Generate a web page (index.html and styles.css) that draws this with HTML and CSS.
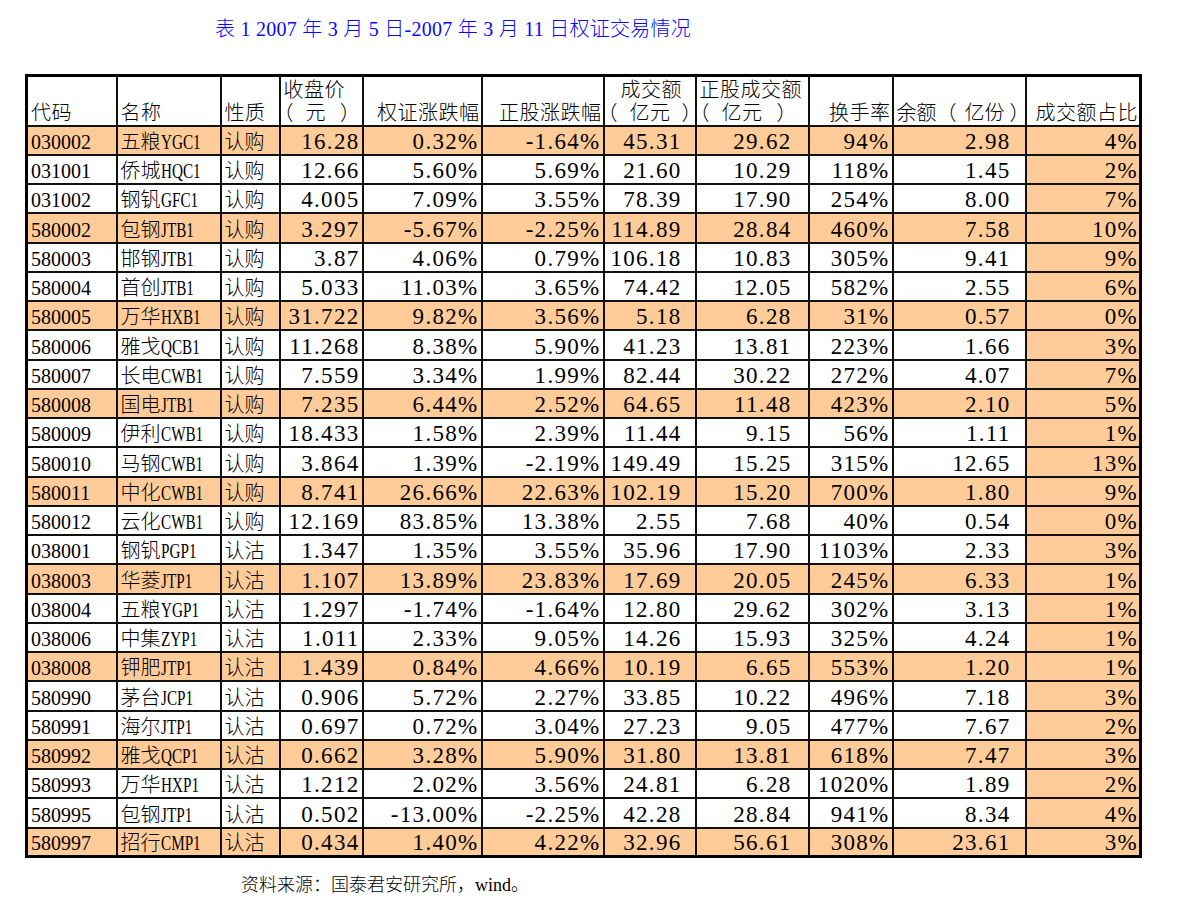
FILE: index.html
```html
<!DOCTYPE html>
<html lang="zh-CN">
<head>
<meta charset="utf-8">
<title>权证交易情况</title>
<link rel="stylesheet" href="styles.css">
</head>
<body>
<div class="page">
  <h1 class="title">表 1 2007 年 3 月 5 日-2007 年 3 月 11 日权证交易情况</h1>
  <table class="grid">
    <colgroup>
      <col class="c1"><col class="c2"><col class="c3"><col class="c4"><col class="c5"><col class="c6">
      <col class="c7"><col class="c8"><col class="c9"><col class="c10"><col class="c11">
    </colgroup>
    <thead>
      <tr>
        <th class="hl">代码</th>
        <th class="hl">名称</th>
        <th class="hl">性质</th>
        <th class="hl">收盘价<br><span class="po">（</span><span class="pin">元</span><span class="pc">）</span></th>
        <th class="hr">权证涨跌幅</th>
        <th class="hr">正股涨跌幅</th>
        <th class="hl narrow"><span class="ind">成交额</span><br><span class="po">（</span><span class="pin">亿元</span><span class="pc">）</span></th>
        <th class="hl">正股成交额<br><span class="po">（</span><span class="pin">亿元</span><span class="pc">）</span></th>
        <th class="hr">换手率</th>
        <th class="hl inline">余额（<span class="pin">亿份</span><span class="pc">）</span></th>
        <th class="hr">成交额占比</th>
      </tr>
    </thead>
    <tbody>
      <tr class="mark"><td class="code">030002</td><td class="name">五粮<span class="en">YGC1</span></td><td class="kind">认购</td><td class="num">16.28</td><td class="num">0.32%</td><td class="num">-1.64%</td><td class="num amt">45.31</td><td class="num amt2">29.62</td><td class="num">94%</td><td class="num bal">2.98</td><td class="num share">4%</td></tr>
      <tr><td class="code">031001</td><td class="name">侨城<span class="en">HQC1</span></td><td class="kind">认购</td><td class="num">12.66</td><td class="num">5.60%</td><td class="num">5.69%</td><td class="num amt">21.60</td><td class="num amt2">10.29</td><td class="num">118%</td><td class="num bal">1.45</td><td class="num share">2%</td></tr>
      <tr><td class="code">031002</td><td class="name">钢钒<span class="en">GFC1</span></td><td class="kind">认购</td><td class="num">4.005</td><td class="num">7.09%</td><td class="num">3.55%</td><td class="num amt">78.39</td><td class="num amt2">17.90</td><td class="num">254%</td><td class="num bal">8.00</td><td class="num share">7%</td></tr>
      <tr class="mark"><td class="code">580002</td><td class="name">包钢<span class="en">JTB1</span></td><td class="kind">认购</td><td class="num">3.297</td><td class="num">-5.67%</td><td class="num">-2.25%</td><td class="num amt">114.89</td><td class="num amt2">28.84</td><td class="num">460%</td><td class="num bal">7.58</td><td class="num share">10%</td></tr>
      <tr><td class="code">580003</td><td class="name">邯钢<span class="en">JTB1</span></td><td class="kind">认购</td><td class="num">3.87</td><td class="num">4.06%</td><td class="num">0.79%</td><td class="num amt">106.18</td><td class="num amt2">10.83</td><td class="num">305%</td><td class="num bal">9.41</td><td class="num share">9%</td></tr>
      <tr><td class="code">580004</td><td class="name">首创<span class="en">JTB1</span></td><td class="kind">认购</td><td class="num">5.033</td><td class="num">11.03%</td><td class="num">3.65%</td><td class="num amt">74.42</td><td class="num amt2">12.05</td><td class="num">582%</td><td class="num bal">2.55</td><td class="num share">6%</td></tr>
      <tr class="mark"><td class="code">580005</td><td class="name">万华<span class="en">HXB1</span></td><td class="kind">认购</td><td class="num">31.722</td><td class="num">9.82%</td><td class="num">3.56%</td><td class="num amt">5.18</td><td class="num amt2">6.28</td><td class="num">31%</td><td class="num bal">0.57</td><td class="num share">0%</td></tr>
      <tr><td class="code">580006</td><td class="name">雅戈<span class="en">QCB1</span></td><td class="kind">认购</td><td class="num">11.268</td><td class="num">8.38%</td><td class="num">5.90%</td><td class="num amt">41.23</td><td class="num amt2">13.81</td><td class="num">223%</td><td class="num bal">1.66</td><td class="num share">3%</td></tr>
      <tr><td class="code">580007</td><td class="name">长电<span class="en">CWB1</span></td><td class="kind">认购</td><td class="num">7.559</td><td class="num">3.34%</td><td class="num">1.99%</td><td class="num amt">82.44</td><td class="num amt2">30.22</td><td class="num">272%</td><td class="num bal">4.07</td><td class="num share">7%</td></tr>
      <tr class="mark"><td class="code">580008</td><td class="name">国电<span class="en">JTB1</span></td><td class="kind">认购</td><td class="num">7.235</td><td class="num">6.44%</td><td class="num">2.52%</td><td class="num amt">64.65</td><td class="num amt2">11.48</td><td class="num">423%</td><td class="num bal">2.10</td><td class="num share">5%</td></tr>
      <tr><td class="code">580009</td><td class="name">伊利<span class="en">CWB1</span></td><td class="kind">认购</td><td class="num">18.433</td><td class="num">1.58%</td><td class="num">2.39%</td><td class="num amt">11.44</td><td class="num amt2">9.15</td><td class="num">56%</td><td class="num bal">1.11</td><td class="num share">1%</td></tr>
      <tr><td class="code">580010</td><td class="name">马钢<span class="en">CWB1</span></td><td class="kind">认购</td><td class="num">3.864</td><td class="num">1.39%</td><td class="num">-2.19%</td><td class="num amt">149.49</td><td class="num amt2">15.25</td><td class="num">315%</td><td class="num bal">12.65</td><td class="num share">13%</td></tr>
      <tr class="mark"><td class="code">580011</td><td class="name">中化<span class="en">CWB1</span></td><td class="kind">认购</td><td class="num">8.741</td><td class="num">26.66%</td><td class="num">22.63%</td><td class="num amt">102.19</td><td class="num amt2">15.20</td><td class="num">700%</td><td class="num bal">1.80</td><td class="num share">9%</td></tr>
      <tr><td class="code">580012</td><td class="name">云化<span class="en">CWB1</span></td><td class="kind">认购</td><td class="num">12.169</td><td class="num">83.85%</td><td class="num">13.38%</td><td class="num amt">2.55</td><td class="num amt2">7.68</td><td class="num">40%</td><td class="num bal">0.54</td><td class="num share">0%</td></tr>
      <tr><td class="code">038001</td><td class="name">钢钒<span class="en">PGP1</span></td><td class="kind">认沽</td><td class="num">1.347</td><td class="num">1.35%</td><td class="num">3.55%</td><td class="num amt">35.96</td><td class="num amt2">17.90</td><td class="num">1103%</td><td class="num bal">2.33</td><td class="num share">3%</td></tr>
      <tr class="mark"><td class="code">038003</td><td class="name">华菱<span class="en">JTP1</span></td><td class="kind">认沽</td><td class="num">1.107</td><td class="num">13.89%</td><td class="num">23.83%</td><td class="num amt">17.69</td><td class="num amt2">20.05</td><td class="num">245%</td><td class="num bal">6.33</td><td class="num share">1%</td></tr>
      <tr><td class="code">038004</td><td class="name">五粮<span class="en">YGP1</span></td><td class="kind">认沽</td><td class="num">1.297</td><td class="num">-1.74%</td><td class="num">-1.64%</td><td class="num amt">12.80</td><td class="num amt2">29.62</td><td class="num">302%</td><td class="num bal">3.13</td><td class="num share">1%</td></tr>
      <tr><td class="code">038006</td><td class="name">中集<span class="en">ZYP1</span></td><td class="kind">认沽</td><td class="num">1.011</td><td class="num">2.33%</td><td class="num">9.05%</td><td class="num amt">14.26</td><td class="num amt2">15.93</td><td class="num">325%</td><td class="num bal">4.24</td><td class="num share">1%</td></tr>
      <tr class="mark"><td class="code">038008</td><td class="name">钾肥<span class="en">JTP1</span></td><td class="kind">认沽</td><td class="num">1.439</td><td class="num">0.84%</td><td class="num">4.66%</td><td class="num amt">10.19</td><td class="num amt2">6.65</td><td class="num">553%</td><td class="num bal">1.20</td><td class="num share">1%</td></tr>
      <tr><td class="code">580990</td><td class="name">茅台<span class="en">JCP1</span></td><td class="kind">认沽</td><td class="num">0.906</td><td class="num">5.72%</td><td class="num">2.27%</td><td class="num amt">33.85</td><td class="num amt2">10.22</td><td class="num">496%</td><td class="num bal">7.18</td><td class="num share">3%</td></tr>
      <tr><td class="code">580991</td><td class="name">海尔<span class="en">JTP1</span></td><td class="kind">认沽</td><td class="num">0.697</td><td class="num">0.72%</td><td class="num">3.04%</td><td class="num amt">27.23</td><td class="num amt2">9.05</td><td class="num">477%</td><td class="num bal">7.67</td><td class="num share">2%</td></tr>
      <tr class="mark"><td class="code">580992</td><td class="name">雅戈<span class="en">QCP1</span></td><td class="kind">认沽</td><td class="num">0.662</td><td class="num">3.28%</td><td class="num">5.90%</td><td class="num amt">31.80</td><td class="num amt2">13.81</td><td class="num">618%</td><td class="num bal">7.47</td><td class="num share">3%</td></tr>
      <tr><td class="code">580993</td><td class="name">万华<span class="en">HXP1</span></td><td class="kind">认沽</td><td class="num">1.212</td><td class="num">2.02%</td><td class="num">3.56%</td><td class="num amt">24.81</td><td class="num amt2">6.28</td><td class="num">1020%</td><td class="num bal">1.89</td><td class="num share">2%</td></tr>
      <tr><td class="code">580995</td><td class="name">包钢<span class="en">JTP1</span></td><td class="kind">认沽</td><td class="num">0.502</td><td class="num">-13.00%</td><td class="num">-2.25%</td><td class="num amt">42.28</td><td class="num amt2">28.84</td><td class="num">941%</td><td class="num bal">8.34</td><td class="num share">4%</td></tr>
      <tr class="mark"><td class="code">580997</td><td class="name">招行<span class="en">CMP1</span></td><td class="kind">认沽</td><td class="num">0.434</td><td class="num">1.40%</td><td class="num">4.22%</td><td class="num amt">32.96</td><td class="num amt2">56.61</td><td class="num">308%</td><td class="num bal">23.61</td><td class="num share">3%</td></tr>
    </tbody>
  </table>
  <p class="source">资料来源：国泰君安研究所，wind。</p>
</div>
</body>
</html>
```
FILE: styles.css
```css
html, body {
  margin: 0;
  padding: 0;
  background: #ffffff;
}

body {
  font-family: "Liberation Serif", "Noto Sans CJK SC", serif;
  color: #000000;
}

.page {
  padding: 17px 0 0 25px;
}

.title {
  margin: 0 0 33px 190px;
  font-size: 20px;
  line-height: 24px;
  font-weight: 300;
  letter-spacing: 0.25px;
  color: #0808ff;
  white-space: nowrap;
}

.grid {
  border-collapse: collapse;
  table-layout: fixed;
  width: 1117px;
  border: 3px solid #000;
}

.c1 { width: 90px; }
.c2 { width: 104px; }
.c3 { width: 59px; }
.c4 { width: 83px; }
.c5 { width: 119px; }
.c6 { width: 122px; }
.c7 { width: 92px; }
.c8 { width: 113px; }
.c9 { width: 84px; }
.c10 { width: 133px; }
.c11 { width: 115px; }

.grid th,
.grid td {
  border: 2px solid #111;
  padding: 0 3px;
  white-space: nowrap;
  overflow: hidden;
  vertical-align: bottom;
}

.grid thead tr {
  height: 50px;
}

.grid th {
  font-size: 20px;
  line-height: 23px;
  font-weight: 300;
  padding-bottom: 0;
  letter-spacing: 0.5px;
}

.grid th.hl { text-align: left; }
.grid th.hr { text-align: right; padding-right: 1px; }

.grid th.narrow {
  padding-right: 0;
}

.ind {
  margin-left: 13px;
}

.po,
.pc {
  font-feature-settings: "halt" 1;
  letter-spacing: 0;
}

.pin {
  margin-left: 12px;
}

.pc {
  margin-left: 14px;
}

.grid th.narrow .pc {
  margin-left: 11px;
}

.grid th.inline {
  letter-spacing: 0;
}

.grid th.inline .pin {
  margin-left: 8px;
}

.grid th.inline .pc {
  margin-left: 5px;
}

.grid tbody tr {
  height: 29.25px;
}

.grid td {
  line-height: 24px;
  padding-bottom: 0;
}

.mark td,
td.share {
  background: #ffcc99;
}

.code {
  font-size: 20px;
  text-align: left;
  padding-left: 2px;
}

.name,
.kind {
  font-size: 20px;
  font-weight: 300;
  text-align: left;
}

.en {
  display: inline-block;
  font-weight: 400;
  transform: scaleX(0.76);
  transform-origin: left center;
}

.num {
  font-size: 23px;
  letter-spacing: 1.3px;
  text-align: right;
}

.grid td.num { padding-right: 2px; }
.grid td.amt { padding-right: 13px; }
.grid td.amt2 { padding-right: 16px; }
.grid td.bal { padding-right: 14px; }
.grid td.share { padding-right: 1px; }

.source {
  margin: 15px 0 0 216px;
  font-size: 18px;
  line-height: 24px;
  font-weight: 300;
}
```
